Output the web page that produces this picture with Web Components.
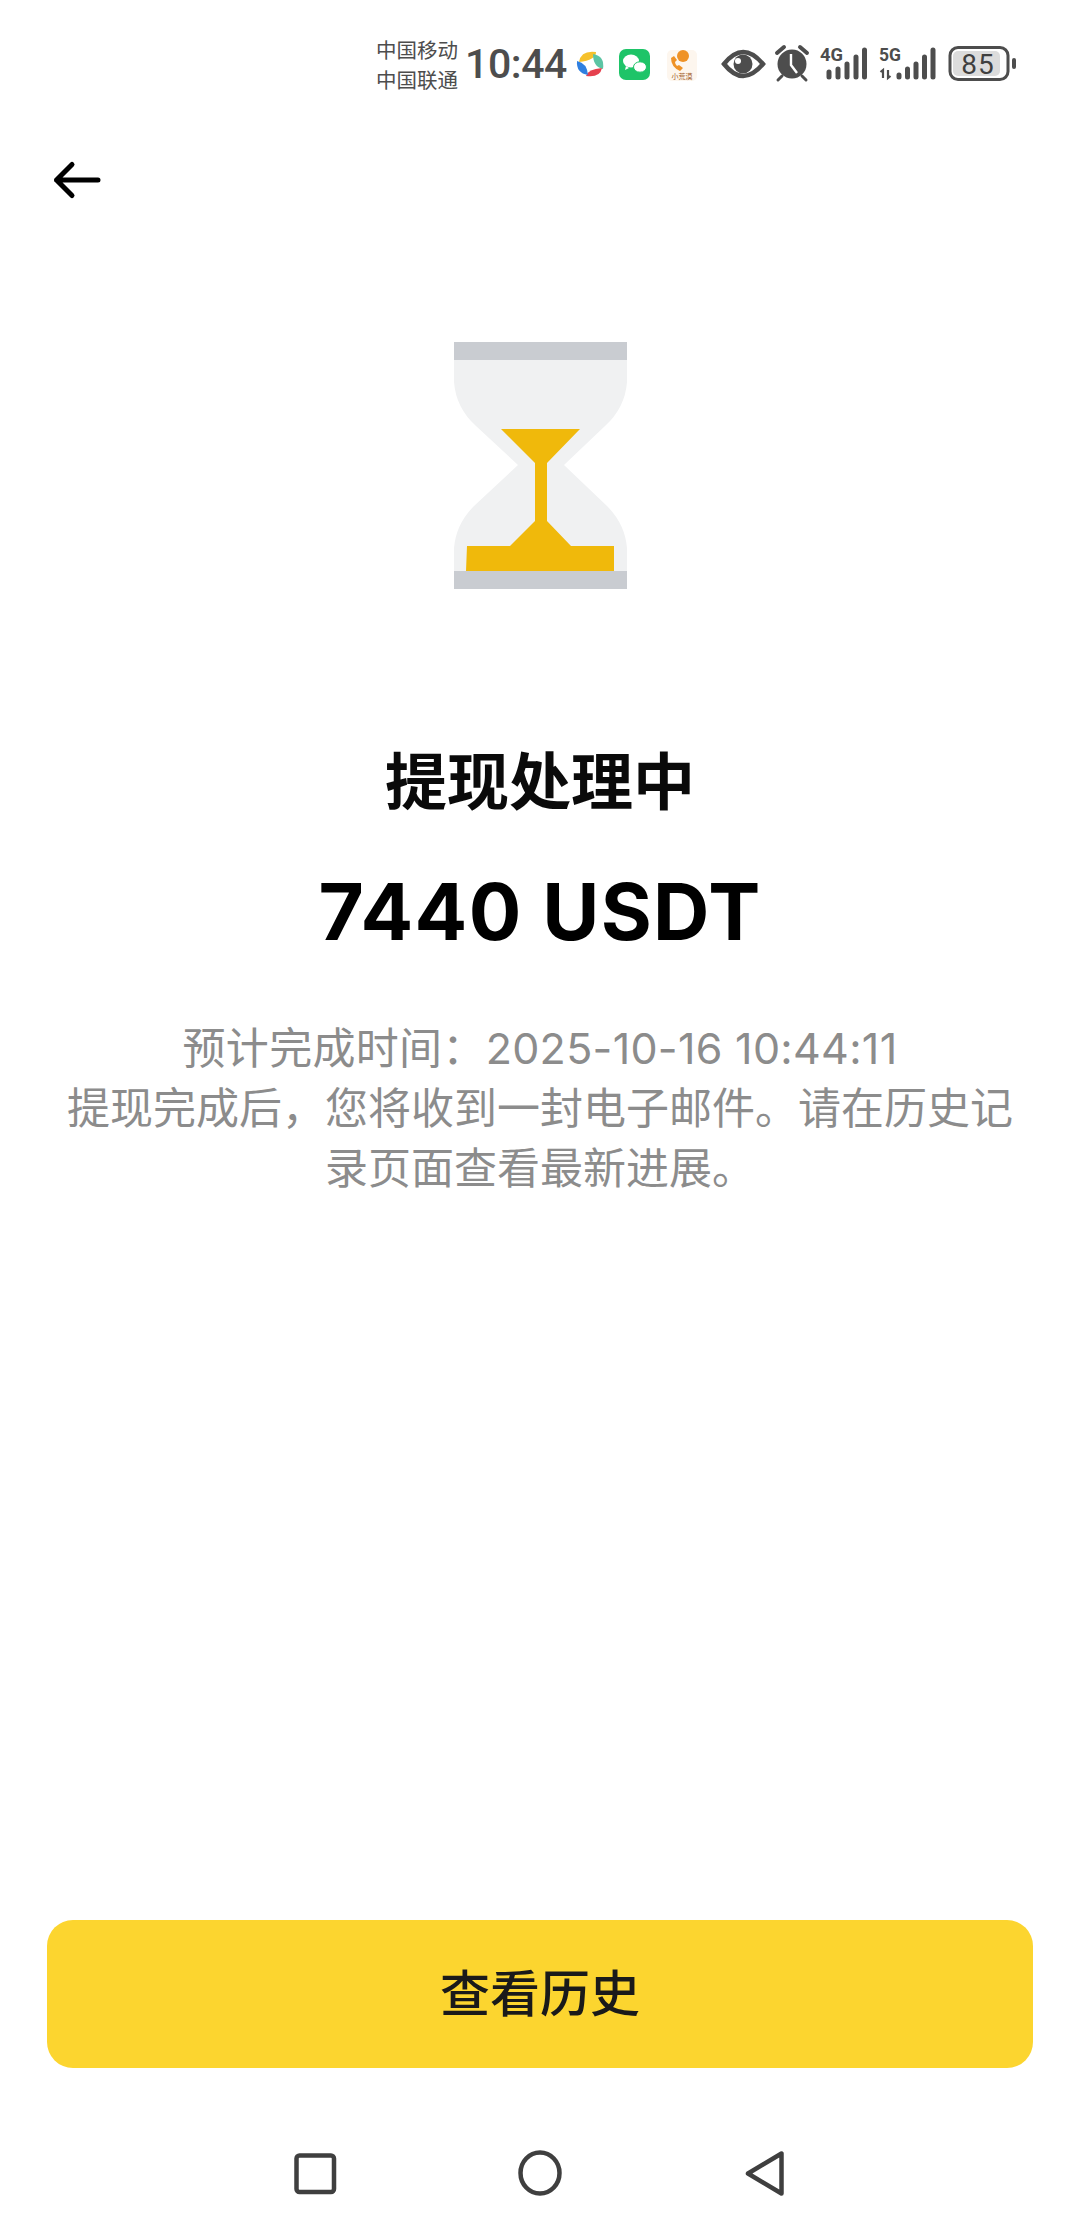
<!DOCTYPE html>
<html lang="zh">
<head>
<meta charset="utf-8">
<title>提现处理中</title>
<style>
html,body{margin:0;padding:0;background:#fff}
body{font-family:"Noto Sans CJK SC","Inter",sans-serif}
</style>
</head>
<body>
<withdraw-page>
  <status-bar slot="status"></status-bar>
  <back-header slot="header"></back-header>
  <hourglass-art slot="art"></hourglass-art>
  <result-text slot="text">
    <span slot="title">提现处理中</span>
    <span slot="amount">7440 USDT</span>
    <span slot="eta">预计完成时间：2025-10-16 10:44:11</span>
    <span slot="note">提现完成后，您将收到一封电子邮件。请在历史记录页面查看最新进展。</span>
  </result-text>
  <primary-button slot="action">查看历史</primary-button>
  <nav-bar slot="nav"></nav-bar>
</withdraw-page>
<script>
function def(name, html){
  customElements.define(name, class extends HTMLElement{
    constructor(){
      super();
      this.attachShadow({mode:"open"}).innerHTML = html;
    }
  });
}
def("withdraw-page", `<style>
:host{display:flex;flex-direction:column;width:1080px;height:2228px;overflow:hidden;background:#fff;color:#000}
.grow{flex:1}
</style>
<slot name="status"></slot><slot name="header"></slot><slot name="art"></slot><slot name="text"></slot>
<div class="grow"></div>
<slot name="action"></slot><slot name="nav"></slot>`);

def("status-bar", `<style>
:host{display:flex;align-items:center;height:88px;box-sizing:border-box;padding:40px 0 0 376px;color:#4d4d4d}
.carrier{display:flex;flex-direction:column;font:400 20.500px/30px "Noto Sans CJK SC",sans-serif;width:82px;white-space:nowrap}
.time{font:500 41px/48px Roboto,sans-serif;margin-left:7px;width:105px;white-space:nowrap;letter-spacing:-.4px}
svg{display:block;flex:none}
</style>
<div class="carrier"><span>中国移动</span><span>中国联通</span></div>
<div class="time">10:44</div>
<svg width="450" height="48" viewBox="570 40 450 48" fill="#4d4d4d">
  <path d="M579 62Q581 50 596 52Q596 60 579 62Z" fill="#f6c12c"/>
  <path d="M593 54Q605 56 603 69Q593 67 593 54Z" fill="#5cc4a4"/>
  <path d="M602 68Q600 78 586 76Q588 69 602 68Z" fill="#e5404e"/>
  <path d="M577 61Q587 63 588 75Q576 73 577 61Z" fill="#2f7fe0"/>
  <rect x="619" y="49" width="31" height="31" rx="7" fill="#1ec468"/>
  <ellipse cx="631" cy="61" rx="8" ry="6.500" fill="#fff"/>
  <path d="M626 66l-1 4 4-2z" fill="#fff"/>
  <ellipse cx="640" cy="67" rx="6.500" ry="5.200" fill="#fff" stroke="#1ec468"/>
  <rect x="667" y="50" width="30" height="31" rx="5" fill="#fdf6ee"/>
  <circle cx="683" cy="56" r="6" fill="#ef9226"/>
  <path d="M671 58q0 9 9 13l3-3-4-3-2 1q-2-2-2-4l2-2-3-4z" fill="#ef9226"/>
  <text x="682" y="79" font-size="7" text-anchor="middle" fill="#a3602a" font-family="Noto Sans CJK SC">小荒漠</text>

  <path d="M724 64q19-24 39 0q-20 24-39 0z" fill="none" stroke="#4d4d4d" stroke-width="4.500"/>
  <circle cx="743" cy="64" r="9.500"/>
  <circle cx="738" cy="61" r="3" fill="#fff"/>

  <circle cx="792" cy="64" r="14.500"/>
  <path d="M777 53l7-6M807 53l-7-6" stroke="#4d4d4d" stroke-width="4" stroke-linecap="round"/>
  <path d="M782 76l-4 4M802 76l4 4" stroke="#4d4d4d" stroke-width="3" stroke-linecap="round"/>
  <path d="M791 54v11l6 8" fill="none" stroke="#fff" stroke-width="2.400"/>

  <text x="820" y="61" font-size="18" font-weight="700" font-family="Roboto" textLength="23" lengthAdjust="spacingAndGlyphs">4G</text>
  <g stroke="#4d4d4d" stroke-width="5" stroke-linecap="round">
    <path d="M829 72v5M838 69v8M847 64v13M856 57v20M864.500 50v27"/>
    <path d="M899 75v2M907.500 69v8M916 64v13M924.500 57v20M933 50v27"/>
  </g>
  <text x="879" y="61" font-size="18" font-weight="700" font-family="Roboto" textLength="22" lengthAdjust="spacingAndGlyphs">5G</text>
  <path d="M883 78v-8l-2.500 2M888 70v8l2.500-2" fill="none" stroke="#4d4d4d" stroke-width="2.200"/>

  <rect x="950" y="47.500" width="58" height="32" rx="8" fill="#fff" stroke="#4d4d4d" stroke-width="3"/>
  <rect x="953" y="51" width="47" height="25" rx="5" fill="#dcdcdc"/>
  <rect x="1012" y="58" width="4" height="11" rx="2"/>
  <text x="978" y="74" font-size="28" text-anchor="middle" font-family="Roboto" fill="#3f3f3f" letter-spacing="1">85</text>
</svg>`);

def("back-header", `<style>
:host{display:block;height:186px;box-sizing:border-box;padding:72px 0 0 52px}
svg{display:block}
</style>
<svg width="50" height="40" viewBox="52 160 50 40" fill="none" stroke="#000" stroke-width="5" stroke-linecap="round" stroke-linejoin="round">
  <path d="M56.500 180H98M72 164.500L56.500 180L72 195.500"/>
</svg>`);

def("hourglass-art", `<style>
:host{display:flex;justify-content:center;padding-top:68px;height:247px}
svg{display:block}
</style>
<svg width="173" height="247" viewBox="454 342 173 247">
  <path d="M454 360H627V382Q625 408 605 426L564 465L607 506Q625 524 627 548V571H454V548Q456 524 474 506L518 465L476 426Q456 408 454 382Z" fill="#f0f1f2"/>
  <path d="M501 429H580L547 463V521L571 546H614V571H466L467 546H510L535 521V463Z" fill="#f0b90b"/>
  <rect x="454" y="342" width="173" height="18" fill="#c9ccd1"/>
  <rect x="454" y="571" width="173" height="18" fill="#c9ccd1"/>
</svg>`);

def("result-text", `<style>
:host{display:flex;flex-direction:column;align-items:center;padding:145px 60px 0;text-align:center}
.title{font:700 62px/88px "Noto Sans CJK SC",sans-serif;color:#0a0a0a}
.amount{font:700 78px/100px Inter,"Noto Sans CJK SC",sans-serif;margin-top:40px;color:#000;letter-spacing:1.300px}
.desc{font:400 43px/60px Inter,"Noto Sans CJK SC",sans-serif;color:#8c8c8c;margin-top:56px;width:960px}
.eta{letter-spacing:.3px}
</style>
<div class="title"><slot name="title"></slot></div>
<div class="amount"><slot name="amount"></slot></div>
<div class="desc"><div class="eta"><slot name="eta"></slot></div><div><slot name="note"></slot></div></div>`);

def("primary-button", `<style>
:host{display:flex;align-items:center;justify-content:center;height:148px;box-sizing:border-box;padding-bottom:8px;margin:0 47px;border-radius:26px;background:#fcd52f;color:#1a1a1a;font:500 50px/1 "Noto Sans CJK SC",sans-serif}
</style><slot></slot>`);

def("nav-bar", `<style>
:host{display:block;height:160px}
svg{display:block}
</style>
<svg width="1080" height="160" viewBox="0 2068 1080 160" fill="none" stroke="#3f3f3f" stroke-width="4.500" stroke-linejoin="round">
  <rect x="296.500" y="2155.500" width="37.500" height="36.500" rx="3"/>
  <ellipse cx="540" cy="2173" rx="19.500" ry="20.500"/>
  <path d="M781.500 2153.500V2193.500L748 2173.500Z"/>
</svg>`);
</script>
</body>
</html>
